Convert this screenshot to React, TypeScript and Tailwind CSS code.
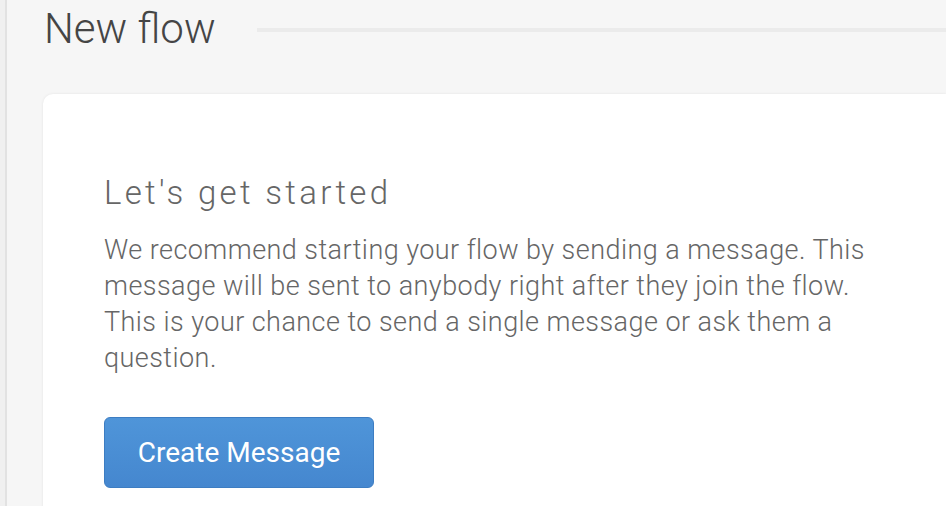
import React from "react";

function GetStartedCard() {
  return (
    <div className="mt-[40px] ml-[6px] rounded-tl-[10px] bg-white pl-[61px] pt-[79px] shadow-[0_0_3px_rgba(0,0,0,0.08)] h-[440px]">
      <h2 className="text-[33px] font-light tracking-[3.3px] text-[#666] leading-[40px]">
        Let's get started
      </h2>
      <p className="mt-[19px] w-[775px] text-[27px] font-light leading-[36px] tracking-[0.45px] text-[#666]">
        We recommend starting your flow by sending a message. This message will
        be sent to anybody right after they join the flow. This is your chance
        to send a single message or ask them a question.
      </p>
      <button className="mt-[41px] h-[71px] w-[270px] rounded-[6px] border border-[#3d7dc2] bg-gradient-to-b from-[#4f95d9] to-[#4587cf] text-[28px] text-white">
        Create Message
      </button>
    </div>
  );
}

export default function App() {
  return (
    <div className="h-[506px] w-[946px] overflow-hidden bg-[#f0f0f0] pl-[5px] font-['Roboto',sans-serif]">
      <div className="h-full border-l-2 border-[#e2e2e2] bg-[#f6f6f6] pl-[30px]">
        <div className="flex items-center pt-[4px]">
          <h1 className="ml-[7px] text-[42px] font-light leading-[50px] text-[#454545]">
            New flow
          </h1>
          <div className="ml-[41px] mt-[2px] h-[4px] flex-1 bg-[#ebebeb]" />
        </div>
        <GetStartedCard />
      </div>
    </div>
  );
}
